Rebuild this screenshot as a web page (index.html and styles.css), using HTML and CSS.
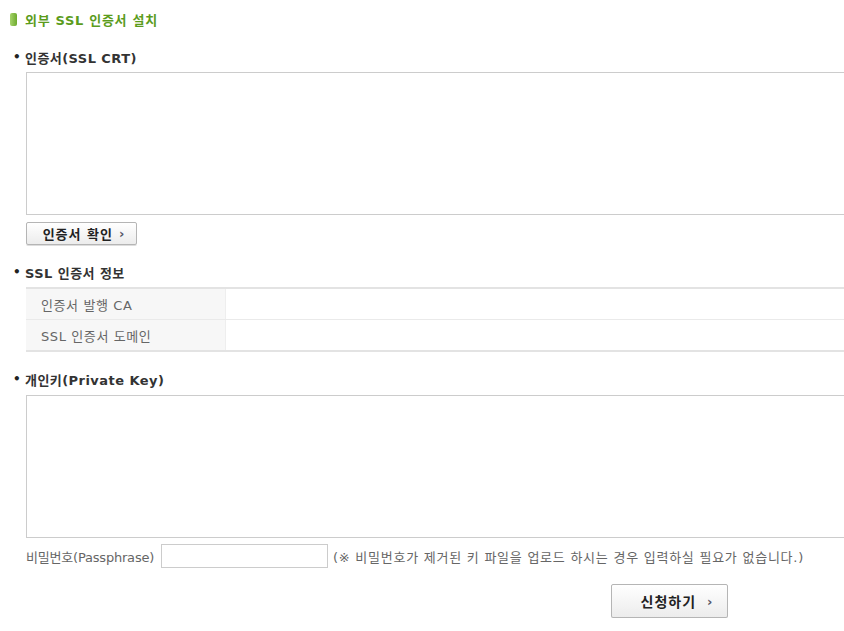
FILE: index.html
```html
<!DOCTYPE html>
<html lang="ko">
<head>
<meta charset="utf-8">
<title>외부 SSL 인증서 설치</title>
<link rel="stylesheet" href="styles.css">
</head>
<body>
<div class="page">
  <h2 class="title"><span class="title-icon"></span>외부 SSL 인증서 설치</h2>

  <div class="section">
    <h3 class="sec-head"><span class="dot">•</span>인증서(SSL CRT)</h3>
    <div class="indent">
      <textarea class="area"></textarea>
      <button class="btn btn-small">인증서 확인 <span class="arr">›</span></button>
    </div>
  </div>

  <div class="section sec-info">
    <h3 class="sec-head"><span class="dot">•</span>SSL 인증서 정보</h3>
    <div class="indent">
      <table class="info">
        <tr><th>인증서 발행 CA</th><td></td></tr>
        <tr><th>SSL 인증서 도메인</th><td></td></tr>
      </table>
    </div>
  </div>

  <div class="section sec-key">
    <h3 class="sec-head"><span class="dot">•</span>개인키(Private Key)</h3>
    <div class="indent indent-key">
      <textarea class="area"></textarea>
      <div class="pass-row">
        <label class="pass-label">비밀번호(Passphrase)</label>
        <input class="pass-input" type="password">
        <span class="pass-note">(※ 비밀번호가 제거된 키 파일을 업로드 하시는 경우 입력하실 필요가 없습니다.)</span>
      </div>
    </div>
  </div>

  <div class="submit-row">
    <button class="btn btn-big">신청하기 <span class="arr">›</span></button>
  </div>
</div>
</body>
</html>
```

FILE: styles.css
```css
html, body {
  margin: 0;
  padding: 0;
  overflow: hidden;
  background: #fff;
}
body {
  font-family: "DejaVu Sans", "Noto Sans CJK KR", sans-serif;
  font-size: 13px;
  color: #333;
}
.page {
  padding: 10px 0 0 10px;
  width: 860px;
}
.title {
  margin: 0;
  display: flex;
  align-items: center;
  font-size: 13px;
  font-weight: bold;
  color: #5b9c1c;
  height: 18px;
  letter-spacing: 0.7px;
}
.title-icon {
  display: inline-block;
  width: 7px;
  height: 13px;
  border-radius: 2px;
  background: linear-gradient(90deg, #a5d36a, #6eaa2e);
  margin-right: 8px;
}
.section {
  margin-top: 20px;
}
.sec-info { margin-top: 18px; }
.sec-key { margin-top: 18px; }
.sec-head {
  margin: 0;
  font-size: 13px;
  font-weight: bold;
  color: #333;
  display: flex;
  align-items: center;
  height: 18px;
  letter-spacing: 0.45px;
}
.dot {
  width: 15px;
  font-size: 12px;
  padding-left: 3px;
  box-sizing: border-box;
  color: #222;
}
.indent {
  padding-left: 16px;
  margin-top: 6px;
}
.indent-key { margin-top: 7px; }
.area {
  display: block;
  width: 840px;
  height: 143px;
  box-sizing: border-box;
  border: 1px solid #ccc;
  margin: 0;
  padding: 4px;
  resize: none;
  font-family: inherit;
}
.btn {
  font-family: inherit;
  font-weight: bold;
  color: #222;
  border: 1px solid #b5b5b5;
  border-radius: 2px;
  background: linear-gradient(#ffffff, #ececec);
  box-shadow: 0 1px 0 #ddd;
  cursor: pointer;
  display: flex;
  align-items: center;
  justify-content: center;
}
.btn .arr {
  color: #556;
  font-size: 13px;
  margin-left: 6px;
  letter-spacing: 0;
}
.btn-small {
  margin-top: 7px;
  width: 111px;
  height: 23px;
  font-size: 13px;
  padding: 0 0 0 4px;
  letter-spacing: 1px;
}
.btn-big {
  width: 117px;
  height: 34px;
  font-size: 14px;
  padding: 0 0 0 14px;
  letter-spacing: 1px;
}
.btn-big .arr { margin-left: 11px; }
.info {
  width: 840px;
  border-collapse: collapse;
  border-top: 2px solid #e3e3e3;
  border-bottom: 2px solid #e3e3e3;
}
.info th, .info td {
  height: 30px;
  padding: 0;
  border-bottom: 1px solid #eaeaea;
}
.info th {
  width: 199px;
  background: #f7f7f7;
  color: #666;
  font-weight: normal;
  text-align: left;
  padding-left: 15px;
  border-right: 1px solid #eee;
  box-sizing: border-box;
  letter-spacing: 0.6px;
}
.pass-row {
  display: flex;
  align-items: center;
  margin-top: 6px;
  color: #666;
}
.pass-label {
  width: 135px;
  flex: none;
  white-space: nowrap;
  letter-spacing: -0.2px;
}
.pass-input {
  width: 167px;
  height: 24px;
  box-sizing: border-box;
  border: 1px solid #ccc;
  margin: 0 5px 0 0;
  padding: 0 4px;
}
.pass-note {
  letter-spacing: 0.75px;
  white-space: nowrap;
}
.submit-row {
  display: flex;
  padding-left: 601px;
  margin-top: 16px;
}
```
